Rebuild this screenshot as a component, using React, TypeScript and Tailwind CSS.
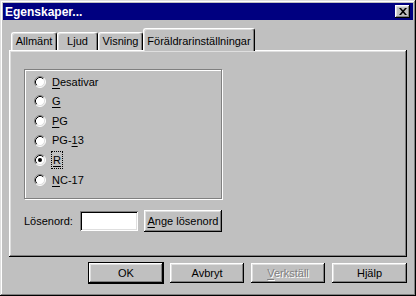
import React from "react";

const raised =
  "shadow-[inset_-1px_-1px_#000,inset_1px_1px_#fff,inset_-2px_-2px_#808080,inset_2px_2px_#dfdfdf]";

function Radio({ checked }: { checked?: boolean }) {
  return (
    <svg width="12" height="12" viewBox="0 0 12 12" className="shrink-0">
      <circle cx="6" cy="6" r="5" fill="#fff" />
      <path d="M2.11 9.89 A5.5 5.5 0 0 1 9.89 2.11" fill="none" stroke="#808080" />
      <path d="M9.89 2.11 A5.5 5.5 0 0 1 2.11 9.89" fill="none" stroke="#fff" />
      <path d="M2.82 9.18 A4.5 4.5 0 0 1 9.18 2.82" fill="none" stroke="#000" />
      <path d="M9.18 2.82 A4.5 4.5 0 0 1 2.82 9.18" fill="none" stroke="#dfdfdf" />
      {checked && <circle cx="6" cy="6" r="2" fill="#000" />}
    </svg>
  );
}

function Label({ pre = "", u, post = "" }: { pre?: string; u: string; post?: string }) {
  return (
    <span>
      {pre}
      <span className="underline underline-offset-2">{u}</span>
      {post}
    </span>
  );
}

const ratings = [
  { pre: "", u: "D", post: "esativar" },
  { pre: "", u: "G", post: "" },
  { pre: "", u: "P", post: "G" },
  { pre: "PG-", u: "1", post: "3" },
  { pre: "", u: "R", post: "", checked: true },
  { pre: "", u: "N", post: "C-17" },
];

function Tab({ label, w }: { label: string; w: number }) {
  return (
    <div
      className="h-[18px] flex items-center justify-center rounded-t-[3px] border-t border-l border-white border-r border-r-black shadow-[inset_-1px_0_#808080,inset_1px_1px_#dfdfdf]"
      style={{ width: w }}
    >
      {label}
    </div>
  );
}

function Button({ children, w, def, disabled }: { children: React.ReactNode; w: number; def?: boolean; disabled?: boolean }) {
  return (
    <button
      className={`h-[20px] flex items-center justify-center bg-[#c0c0c0] ${raised} ${def ? "outline outline-1 outline-black" : ""} ${disabled ? "text-[#808080] [text-shadow:1px_1px_#fff]" : "text-black"}`}
      style={{ width: w }}
    >
      {children}
    </button>
  );
}

export default function App() {
  return (
    <div className="w-[416px] h-[296px] bg-[#c0c0c0] text-[11px] text-black font-['Liberation_Sans',Arial,sans-serif] p-[3px] flex flex-col shadow-[inset_-1px_-1px_#000,inset_1px_1px_#dfdfdf,inset_-2px_-2px_#808080,inset_2px_2px_#fff]">
      {/* title bar */}
      <div className="h-[17px] bg-[#000080] flex items-center justify-between pl-[2px] pr-[3px]">
        <span className="text-white font-bold text-[12px] leading-none">Egenskaper...</span>
        <div className={`w-[15px] h-[13px] bg-[#c0c0c0] flex items-center justify-center ${raised}`}>
          <svg width="8" height="7" viewBox="0 0 8 7">
            <path d="M0 0h2l2 2.2L6 0h2L5 3.5 8 7H6L4 4.8 2 7H0l3-3.5z" fill="#000" />
          </svg>
        </div>
      </div>

      {/* tabs */}
      <div className="mt-[8px] mx-[6px] flex items-end h-[22px] pl-[2px]">
        <Tab label="Allmänt" w={46} />
        <Tab label="Ljud" w={41} />
        <Tab label="Visning" w={45} />
        <div className="relative z-10 h-[23px] -mb-px w-[112px] flex items-start justify-center pt-[4px] bg-[#c0c0c0] rounded-t-[3px] border-t border-l border-white border-r border-r-black shadow-[inset_-1px_0_#808080,inset_1px_1px_#dfdfdf]">
          Föräldrarinställningar
        </div>
      </div>

      {/* panel */}
      <div className={`mx-[6px] h-[207px] pl-[15px] pt-[19px] ${raised}`}>
        <div className="w-[198px] h-[130px] border border-[#808080] shadow-[1px_1px_0_#fff,inset_1px_1px_0_#fff] pt-[2px] pl-[9px] flex flex-col">
          {ratings.map((r, i) => (
            <div key={i} className="h-[19.6px] flex items-center gap-[6px]">
              <Radio checked={r.checked} />
              <span className={r.checked ? "outline outline-1 outline-dotted outline-black px-[1px]" : ""}>
                <Label pre={r.pre} u={r.u} post={r.post} />
              </span>
            </div>
          ))}
        </div>

        <div className="mt-[11px] flex items-center">
          <span className="w-[56px]">Lösenord:</span>
          <div className="w-[58px] h-[20px] bg-white shadow-[inset_1px_1px_#808080,inset_-1px_-1px_#fff,inset_2px_2px_#000,inset_-2px_-2px_#dfdfdf]" />
          <button className={`ml-[6px] w-[78px] h-[22px] bg-[#c0c0c0] ${raised}`}>
            <Label u="A" post="nge lösenord" />
          </button>
        </div>
      </div>

      {/* bottom buttons */}
      <div className="mt-[6px] mx-[6px] flex justify-end gap-[7px]">
        <Button w={74} def>OK</Button>
        <Button w={74}>Avbryt</Button>
        <Button w={74} disabled>
          <Label u="V" post="erkställ" />
        </Button>
        <Button w={75}>Hjälp</Button>
      </div>
    </div>
  );
}
